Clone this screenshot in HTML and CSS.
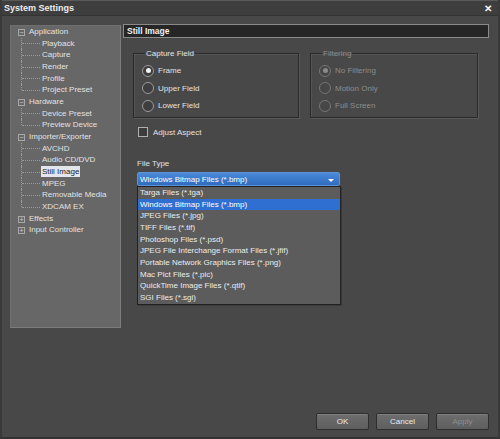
FILE: index.html
```html
<!DOCTYPE html>
<html lang="en">
<head>
    <meta charset="UTF-8">
    <link rel="stylesheet" href="styles.css">
    <title>System Settings</title>
</head>
<body>
<div class="window">
    <div class="titlebar">
        <span class="title">System Settings</span>
        <span class="close">&#x2715;</span>
    </div>

    <div class="main">
        <ul class="tree">
            <li class="node open"><span class="box">&minus;</span>Application
                <ul class="children">
                    <li>Playback</li>
                    <li>Capture</li>
                    <li>Render</li>
                    <li>Profile</li>
                    <li>Project Preset</li>
                </ul>
            </li>
            <li class="node open"><span class="box">&minus;</span>Hardware
                <ul class="children">
                    <li>Device Preset</li>
                    <li>Preview Device</li>
                </ul>
            </li>
            <li class="node open"><span class="box">&minus;</span>Importer/Exporter
                <ul class="children">
                    <li>AVCHD</li>
                    <li>Audio CD/DVD</li>
                    <li><span class="selected">Still Image</span></li>
                    <li>MPEG</li>
                    <li>Removable Media</li>
                    <li>XDCAM EX</li>
                </ul>
            </li>
            <li class="node"><span class="box">+</span>Effects</li>
            <li class="node"><span class="box">+</span>Input Controller</li>
        </ul>

        <div class="content">
            <div class="page-header">Still Image</div>

            <div class="groups">
                <fieldset class="group">
                    <legend>Capture Field</legend>
                    <label class="radio"><span class="dot checked"></span>Frame</label>
                    <label class="radio"><span class="dot"></span>Upper Field</label>
                    <label class="radio"><span class="dot"></span>Lower Field</label>
                </fieldset>
                <fieldset class="group disabled">
                    <legend>Filtering</legend>
                    <label class="radio"><span class="dot checked"></span>No Filtering</label>
                    <label class="radio"><span class="dot"></span>Motion Only</label>
                    <label class="radio"><span class="dot"></span>Full Screen</label>
                </fieldset>
            </div>

            <label class="check"><span class="checkbox"></span>Adjust Aspect</label>

            <div class="file-type">
                <div class="field-label">File Type</div>
                <div class="combo">
                    <div class="select">
                        <span>Windows Bitmap Files (*.bmp)</span>
                        <span class="arrow"></span>
                    </div>
                    <ul class="dropdown">
                        <li>Targa Files (*.tga)</li>
                        <li class="active">Windows Bitmap Files (*.bmp)</li>
                        <li>JPEG Files (*.jpg)</li>
                        <li>TIFF Files (*.tif)</li>
                        <li>Photoshop Files (*.psd)</li>
                        <li>JPEG File Interchange Format Files (*.jfif)</li>
                        <li>Portable Network Graphics Files (*.png)</li>
                        <li>Mac Pict Files (*.pic)</li>
                        <li>QuickTime Image Files (*.qtif)</li>
                        <li>SGI Files (*.sgi)</li>
                    </ul>
                </div>
            </div>
        </div>
    </div>

    <div class="footer">
        <button class="btn">OK</button>
        <button class="btn">Cancel</button>
        <button class="btn" disabled>Apply</button>
    </div>
</div>
</body>
</html>
```

FILE: styles.css
```css
/* Global */
* {
    box-sizing: border-box;
    margin: 0;
    padding: 0;
}

body {
    font-family: "Liberation Sans", Arial, sans-serif;
    font-size: 8px;
    color: #e2e2e2;
    background: #484848;
}

ul {
    list-style: none;
}

/* Window */
.window {
    width: 500px;
    height: 439px;
    display: flex;
    flex-direction: column;
    background: #484848;
    border-left: 2px solid #3a3a3a;
    border-right: 2px solid #3a3a3a;
    border-bottom: 2px solid #333;
}

.titlebar {
    height: 16px;
    display: flex;
    align-items: center;
    justify-content: space-between;
    padding: 0 6px 0 2px;
    background: #3e3e3e;
    border-top: 1px solid #5a5a5a;
    border-bottom: 1px solid #333;
}

.title {
    font-weight: 700;
    font-size: 9px;
    color: #ececec;
}

.close {
    font-size: 10px;
    font-weight: 700;
    color: #f4f4f4;
}

.main {
    display: flex;
    gap: 2px;
    padding: 8px 9px 0 8px;
}

/* Tree */
.tree {
    width: 111px;
    height: 303px;
    margin-top: 1px;
    padding: 0 0 0 7px;
    background: #676767;
    border: 1px solid #6f6f6f;
    border-right-color: #7c7c7c;
    border-bottom-color: #7c7c7c;
    line-height: 11.65px;
    white-space: nowrap;
}

.node .box {
    display: inline-block;
    width: 7px;
    height: 7px;
    margin-right: 4px;
    border: 1px solid #a8a8a8;
    font-size: 7px;
    line-height: 5px;
    text-align: center;
    color: #d0d0d0;
    vertical-align: -1px;
}

.children li {
    position: relative;
    padding-left: 24px;
}

.children li::before {
    content: "";
    position: absolute;
    left: 3px;
    top: 0;
    bottom: 0;
    border-left: 1px dotted #9a9a9a;
}

.children li:last-child::before {
    bottom: 50%;
}

.children li::after {
    content: "";
    position: absolute;
    left: 4px;
    top: 50%;
    width: 18px;
    border-top: 1px dotted #9a9a9a;
}

.selected {
    background: #e4e6ee;
    color: #1e1e1e;
    padding: 1px 1px;
    margin-left: -1px;
}

/* Content */
.content {
    flex: 1;
}

.page-header {
    height: 14px;
    padding-left: 3px;
    line-height: 12px;
    font-weight: 700;
    font-size: 8.5px;
    color: #f0f0f0;
    background: #262626;
    border: 1px solid #8a8a8a;
}

.groups {
    display: flex;
    gap: 11px;
    margin: 11px 0 0 10px;
}

.group {
    width: 166px;
    height: 69px;
    padding: 4px 0 0 8px;
    border: 1px solid #2a2a2a;
    box-shadow: 1px 1px 0 #5a5a5a, inset 1px 1px 0 #555;
}

.group.disabled {
    width: 168px;
    color: #8c8c8c;
}

.group legend {
    padding: 0 1px;
    margin-left: 3px;
    font-size: 8px;
}

.radio {
    display: flex;
    align-items: center;
    height: 17.5px;
}

.dot {
    width: 12px;
    height: 12px;
    margin-right: 4px;
    border: 1px solid #9a9a9a;
    border-radius: 50%;
    background: #3e3e3e;
    display: flex;
    align-items: center;
    justify-content: center;
}

.disabled .dot {
    border-color: #767676;
    background: #464646;
}

.dot.checked::after {
    content: "";
    width: 5px;
    height: 5px;
    border-radius: 50%;
    background: #f4f4f4;
}

.disabled .dot.checked::after {
    background: #8a8a8a;
}

.check {
    display: flex;
    align-items: center;
    margin: 9px 0 0 15px;
}

.checkbox {
    width: 10px;
    height: 10px;
    margin-right: 5px;
    border: 1px solid #b0b0b0;
    background: #3c3c3c;
}

/* File type */
.file-type {
    width: 203px;
    margin: 22px 0 0 14px;
}

.field-label {
    margin-bottom: 4px;
}

.combo {
    position: relative;
}

.select {
    height: 14px;
    display: flex;
    align-items: center;
    justify-content: space-between;
    padding: 0 5px 0 2px;
    color: #fff;
    background: linear-gradient(#4a8ad8, #2f6cc0);
    border: 1px solid #5c93d6;
    border-radius: 2px;
}

.arrow {
    width: 0;
    height: 0;
    margin-top: 2px;
    border-left: 3px solid transparent;
    border-right: 3px solid transparent;
    border-top: 3px solid #fff;
}

.dropdown {
    position: absolute;
    left: 0;
    top: 100%;
    width: 204px;
    background: #5c5c5c;
    border: 1px solid #222;
    box-shadow: 1px 1px 0 #3a3a3a;
    line-height: 11.65px;
    color: #ececec;
}

.dropdown li {
    padding-left: 2px;
    white-space: nowrap;
}

.dropdown li.active {
    background: #2f6fd2;
    color: #fff;
}

/* Buttons */
.footer {
    margin-top: auto;
    display: flex;
    justify-content: flex-end;
    gap: 7px;
    padding: 0 9px 7px 0;
}

.btn {
    width: 53px;
    height: 17px;
    font-family: inherit;
    font-size: 8px;
    color: #ececec;
    background: linear-gradient(#6e6e6e, #5e5e5e);
    border: 1px solid #2e2e2e;
    border-radius: 2px;
    box-shadow: inset 0 1px 0 #7e7e7e;
}

.btn:disabled {
    color: #8e8e8e;
}
```
